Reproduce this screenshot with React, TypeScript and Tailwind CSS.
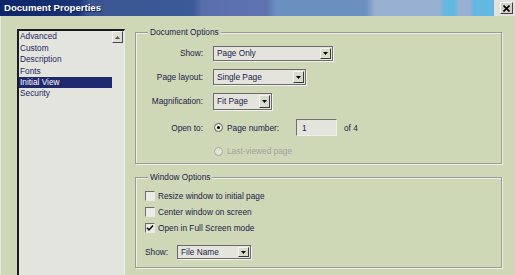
import React from "react";

const txt = "text-[8.3px] leading-[10px] text-[#20204a]";

function Arrow() {
  return (
    <svg width="5" height="3" viewBox="0 0 5 3">
      <path d="M0 0H5L2.5 3Z" fill="#000" />
    </svg>
  );
}

function Select({ cls, text }: { cls: string; text: string }) {
  return (
    <div
      className={
        "flex bg-[#e4e4dc] border border-[#6c6a70] shadow-[1px_1px_0_#f2f2ec] " +
        cls
      }
    >
      <span className={"flex-1 pl-[3px] flex items-center " + txt}>{text}</span>
      <span className="w-[11px] my-[1px] mr-[1px] bg-[#d8dccb] border border-t-[#f4f4ee] border-l-[#f4f4ee] border-r-[#3a3a3a] border-b-[#3a3a3a] flex items-center justify-center">
        <Arrow />
      </span>
    </div>
  );
}

function Radio({ checked, disabled }: { checked?: boolean; disabled?: boolean }) {
  return (
    <span
      className={
        "w-[9px] h-[9px] rounded-full border flex items-center justify-center " +
        (disabled ? "border-[#a8a8a8] bg-[#dfe3d0]" : "border-[#5c5c5c] bg-[#eeeee8]")
      }
    >
      {checked && <span className="w-[3px] h-[3px] rounded-full bg-black" />}
    </span>
  );
}

function Check({ checked }: { checked?: boolean }) {
  return (
    <span className="w-[10px] h-[10px] border border-t-[#6c6c6c] border-l-[#6c6c6c] border-r-[#ecece6] border-b-[#ecece6] bg-[#ecece6] flex items-center justify-center">
      {checked && (
        <svg width="8" height="8" viewBox="0 0 8 8">
          <path d="M1 3.8 L3 6 L7 1.5" stroke="#000" strokeWidth="1.5" fill="none" />
        </svg>
      )}
    </span>
  );
}

function Group({
  title,
  cls,
  children,
}: {
  title: string;
  cls: string;
  children: React.ReactNode;
}) {
  return (
    <div
      className={
        "relative w-[367px] border border-[#9a9a9c] shadow-[1px_1px_0_#eef0e4,inset_1px_1px_0_#eef0e4] " +
        cls
      }
    >
      <span className={"absolute left-[12px] -top-[6px] px-[2px] bg-[#cfd8b6] " + txt}>
        {title}
      </span>
      {children}
    </div>
  );
}

export default function App() {
  const items = ["Advanced", "Custom", "Description", "Fonts", "Initial View", "Security"];
  return (
    <div className="w-[515px] h-[275px] overflow-hidden bg-[#cfd8b6] font-['Liberation_Sans',Arial,sans-serif] flex flex-col">
      {/* Title bar */}
      <div className="h-[16px] flex shrink-0">
        <div className="flex-1 flex items-center pl-[4px] bg-[linear-gradient(to_right,#0c256a_0%,#1c3578_16%,#3a5592_18%,#3c5a98_39%,#5a6eae_41%,#5e74b0_54%,#6a90c0_56%,#6a90c0_74%,#98b0d2_76%,#98b0d2_89%,#62b8e0_90%,#62b8e0_92%,#98b0d2_93%,#98b0d2_95%,#62b8e0_96%)]">
          <span className="text-[9.6px] font-bold text-white leading-none [text-shadow:1px_1px_0_#10204a]">
            Document Properties
          </span>
        </div>
        <div className="w-[21px] bg-[#e2e2e0] flex items-center justify-end pr-[2px]">
          <span className="w-[13px] h-[12px] bg-[#d4d0c8] border border-t-[#fff] border-l-[#fff] border-r-[#404040] border-b-[#404040] flex items-center justify-center">
            <svg width="7" height="7" viewBox="0 0 7 7">
              <path d="M0.5 0.5L6.5 6.5M6.5 0.5L0.5 6.5" stroke="#000" strokeWidth="1.6" />
            </svg>
          </span>
        </div>
      </div>

      {/* Body */}
      <div className="flex-1 flex border-l border-[#e4e8d8]">
        {/* Left list */}
        <div className="pl-[16px] pt-[13px] flex">
          <div className="w-[108px] h-full flex bg-[#e3e4dd] border-t-2 border-l-2 border-t-[#1a1a22] border-l-[#1a1a22] border-r border-r-[#f0f0ea]">
            <div className="flex-1 flex flex-col pt-[0px]">
              {items.map((it) => (
                <div
                  key={it}
                  className={
                    "h-[11.4px] flex items-center pl-[1px] text-[8.3px] " +
                    (it === "Initial View"
                      ? "bg-[#1e286c] text-white"
                      : "text-[#1c2466]")
                  }
                >
                  {it}
                </div>
              ))}
            </div>
            <div className="w-[12px] flex flex-col">
              <span className="w-[11px] h-[12px] bg-[#dde0d2] border border-t-[#f4f4ee] border-l-[#f4f4ee] border-r-[#4a4650] border-b-[#4a4650] flex items-center justify-center">
                <svg width="5" height="3" viewBox="0 0 5 3">
                  <path d="M0 3H5L2.5 0Z" fill="#555" />
                </svg>
              </span>
            </div>
          </div>
        </div>

        {/* Right pane */}
        <div className="pl-[10px] pt-[16px] flex flex-col">
          <Group title="Document Options" cls="h-[132px]">
            <div className="flex flex-col pt-[8px]">
              <div className="h-[24px] flex items-center">
                <span className={"w-[67px] text-right " + txt}>Show:</span>
                <Select cls="ml-[10px] w-[120px] h-[15px]" text="Page Only" />
              </div>
              <div className="h-[24px] flex items-center">
                <span className={"w-[67px] text-right " + txt}>Page layout:</span>
                <Select cls="ml-[10px] w-[93px] h-[16px]" text="Single Page" />
              </div>
              <div className="h-[24px] flex items-center">
                <span className={"w-[67px] text-right " + txt}>Magnification:</span>
                <Select cls="ml-[10px] w-[59px] h-[17px]" text="Fit Page" />
              </div>
              <div className="h-[27px] mt-[1px] flex items-center">
                <span className={"w-[67px] text-right " + txt}>Open to:</span>
                <span className="ml-[11px]">
                  <Radio checked />
                </span>
                <span className={"ml-[4px] w-[69px] " + txt}>Page number:</span>
                <span className="w-[41px] h-[17px] bg-[#e4e4dc] border border-t-[#707070] border-l-[#707070] border-r-[#f0f0ea] border-b-[#f0f0ea] flex items-center pl-[5px]">
                  <span className={txt}>1</span>
                </span>
                <span className={"ml-[7px] " + txt}>of 4</span>
              </div>
              <div className="h-[20px] flex items-center">
                <span className="w-[67px]" />
                <span className="ml-[11px]">
                  <Radio disabled />
                </span>
                <span className="ml-[4px] text-[8.3px] leading-[10px] text-[#a0a2a0]">
                  Last-viewed page
                </span>
              </div>
            </div>
          </Group>

          <Group title="Window Options" cls="h-[91px] mt-[13px]">
            <div className="flex flex-col pl-[9px] pt-[10px]">
              <div className="h-[16px] flex items-center">
                <Check />
                <span className={"ml-[3px] " + txt}>Resize window to initial page</span>
              </div>
              <div className="h-[16px] flex items-center">
                <Check />
                <span className={"ml-[3px] " + txt}>Center window on screen</span>
              </div>
              <div className="h-[16px] flex items-center">
                <Check checked />
                <span className={"ml-[3px] " + txt}>Open in Full Screen mode</span>
              </div>
              <div className="h-[16px] mt-[8px] flex items-center">
                <span className={"w-[32px] " + txt}>Show:</span>
                <Select cls="w-[74px] h-[14px] border-[#5a6aa0]" text="File Name" />
              </div>
            </div>
          </Group>
        </div>
      </div>
    </div>
  );
}
